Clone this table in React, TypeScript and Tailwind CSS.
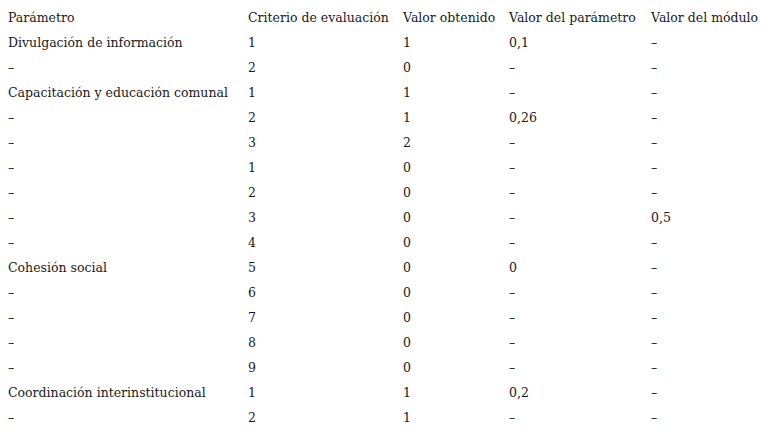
import React, { FC } from "react";

type Row = [string, string, string, string, string];

const D = "–";

const header: Row = [
  "Parámetro",
  "Criterio de evaluación",
  "Valor obtenido",
  "Valor del parámetro",
  "Valor del módulo",
];

const rows: Row[] = [
  ["Divulgación de información", "1", "1", "0,1", D],
  [D, "2", "0", D, D],
  ["Capacitación y educación comunal", "1", "1", D, D],
  [D, "2", "1", "0,26", D],
  [D, "3", "2", D, D],
  [D, "1", "0", D, D],
  [D, "2", "0", D, D],
  [D, "3", "0", D, "0,5"],
  [D, "4", "0", D, D],
  ["Cohesión social", "5", "0", "0", D],
  [D, "6", "0", D, D],
  [D, "7", "0", D, D],
  [D, "8", "0", D, D],
  [D, "9", "0", D, D],
  ["Coordinación interinstitucional", "1", "1", "0,2", D],
  [D, "2", "1", D, D],
];

const TableRow: FC<{ row: Row }> = ({ row }) => (
  <tr className="h-[25px]">
    <td className="w-[240px] px-1 whitespace-nowrap">{row[0]}</td>
    <td className="w-[155px] px-1 whitespace-nowrap">{row[1]}</td>
    <td className="w-[106px] px-1 whitespace-nowrap">{row[2]}</td>
    <td className="w-[142px] px-1 whitespace-nowrap">{row[3]}</td>
    <td className="px-1 whitespace-nowrap">{row[4]}</td>
  </tr>
);

const App: FC = () => {
  return (
    <div className="w-[775px] h-[433px] bg-white pt-[6px] pl-[4px] text-[#1a1a1a] overflow-hidden">
      <table
        className="table-fixed border-collapse text-[12.5px] leading-none"
        style={{ fontFamily: '"DejaVu Serif", "Liberation Serif", serif' }}
      >
        <tbody>
          <TableRow row={header} />
          {rows.map((r, i) => (
            <TableRow key={i} row={r} />
          ))}
        </tbody>
      </table>
    </div>
  );
};

export default App;
